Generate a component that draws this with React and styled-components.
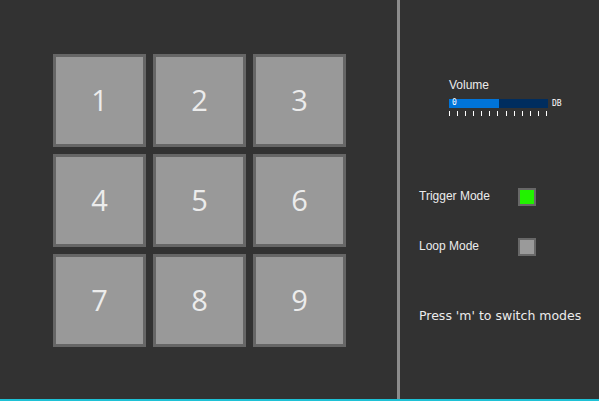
import React from 'react';
import styled, { createGlobalStyle } from 'styled-components';

const Global = createGlobalStyle`
  html, body {
    margin: 0;
    padding: 0;
    background: #323232;
  }
`;

const Screen = styled.div`
  display: flex;
  width: 599px;
  height: 401px;
  box-sizing: border-box;
  border-bottom: 2px solid #1ec2d6;
  background: #323232;
  font-family: 'Liberation Sans', Arial, sans-serif;
  overflow: hidden;
`;

const PadArea = styled.div`
  width: 397px;
  padding: 54px 0 0 53px;
  box-sizing: border-box;
`;

const PadGrid = styled.div`
  display: grid;
  grid-template-columns: repeat(3, 93px);
  grid-auto-rows: 93px;
  gap: 7px;
`;

const Pad = styled.div`
  display: flex;
  align-items: center;
  justify-content: center;
  box-sizing: border-box;
  padding-bottom: 2px;
  background: #999999;
  border: 3px solid #666666;
  color: #ececec;
  font-family: 'Open Sans', 'DejaVu Sans', sans-serif;
  font-size: 29px;
  font-weight: 400;
`;

const Divider = styled.div`
  width: 3px;
  background: #8c8c8c;
`;

const Side = styled.div`
  flex: 1;
  display: flex;
  flex-direction: column;
  padding: 78px 0 0 19px;
  color: #ececec;
`;

const VolumeBlock = styled.div`
  display: flex;
  flex-direction: column;
  margin-left: 30px;
`;

const VolumeLabel = styled.div`
  font-size: 12px;
  line-height: 15px;
  margin-bottom: 6px;
`;

const SliderRow = styled.div`
  display: flex;
  align-items: center;
  gap: 4px;
`;

const Track = styled.div`
  position: relative;
  display: flex;
  width: 99px;
  height: 9px;
  background: #002d5e;
`;

const Fill = styled.div`
  height: 100%;
  background: #0074d9;
`;

const SliderValue = styled.span`
  position: absolute;
  left: 3px;
  top: -1px;
  font-family: 'DejaVu Sans Mono', monospace;
  font-size: 8px;
  line-height: 10px;
  color: #ffffff;
`;

const Unit = styled.span`
  font-family: 'DejaVu Sans Mono', monospace;
  font-size: 8px;
  line-height: 9px;
  color: #ffffff;
`;

const Ticks = styled.div`
  display: flex;
  justify-content: space-between;
  width: 98px;
  margin-top: 3px;
`;

const Tick = styled.div`
  width: 1px;
  height: 5px;
  background: #ffffff;
`;

const ModeRow = styled.div`
  display: flex;
  align-items: center;
  height: 18px;
  margin-top: ${p => p.$top}px;
`;

const ModeLabel = styled.span`
  width: 99px;
  font-size: 12px;
  line-height: 14px;
  margin-top: -2px;
`;

const Toggle = styled.div`
  width: 18px;
  height: 18px;
  box-sizing: border-box;
  border: 2px solid #686868;
  background: ${p => (p.$on ? '#22f200' : '#9a9a9a')};
`;

const Hint = styled.div`
  margin-top: 52px;
  font-family: 'DejaVu Sans', sans-serif;
  font-size: 12.5px;
`;

export default function App() {
  const pads = [1, 2, 3, 4, 5, 6, 7, 8, 9];
  const volume = 50;

  return (
    <>
      <Global />
      <Screen>
        <PadArea>
          <PadGrid>
            {pads.map(n => (
              <Pad key={n}>{n}</Pad>
            ))}
          </PadGrid>
        </PadArea>
        <Divider />
        <Side>
          <VolumeBlock>
            <VolumeLabel>Volume</VolumeLabel>
            <SliderRow>
              <Track>
                <Fill style={{ width: `${volume}%` }} />
                <SliderValue>0</SliderValue>
              </Track>
              <Unit>DB</Unit>
            </SliderRow>
            <Ticks>
              {Array.from({ length: 13 }).map((_, i) => (
                <Tick key={i} />
              ))}
            </Ticks>
          </VolumeBlock>
          <ModeRow $top={72}>
            <ModeLabel>Trigger Mode</ModeLabel>
            <Toggle $on />
          </ModeRow>
          <ModeRow $top={32}>
            <ModeLabel>Loop Mode</ModeLabel>
            <Toggle />
          </ModeRow>
          <Hint>Press 'm' to switch modes</Hint>
        </Side>
      </Screen>
    </>
  );
}
